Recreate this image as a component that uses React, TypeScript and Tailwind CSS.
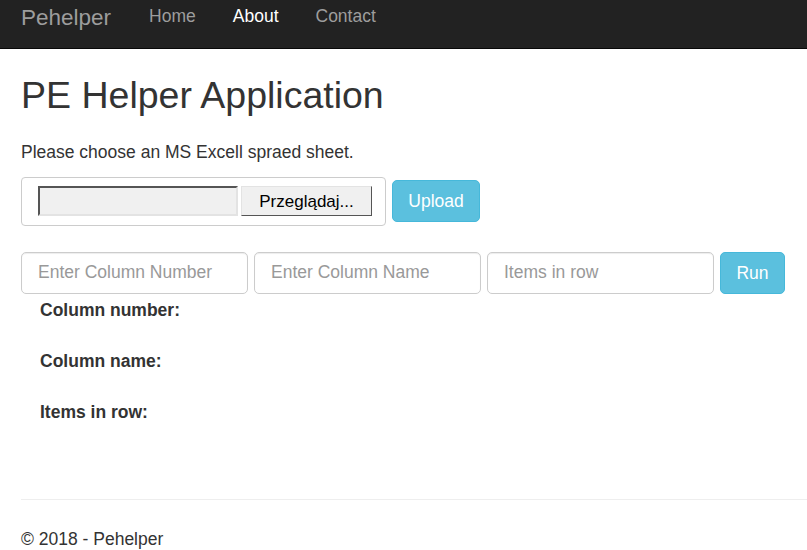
import React from 'react';

const NavLink: React.FC<{ label: string; active?: boolean }> = ({ label, active }) => (
  <a href="#" className={active ? 'text-white' : 'text-[#9d9d9d]'}>
    {label}
  </a>
);

const TextField: React.FC<{ placeholder: string }> = ({ placeholder }) => (
  <input
    type="text"
    placeholder={placeholder}
    className="h-[42px] w-[227px] rounded-[5px] border border-[#ccc] bg-white px-4 text-[17.5px] text-[#555] placeholder:text-[#999] shadow-[inset_0_1px_1px_rgba(0,0,0,0.075)] outline-none"
  />
);

const App: React.FC = () => {
  return (
    <div className="min-h-[550px] overflow-hidden bg-white font-['Liberation_Sans',Arial,sans-serif] text-[17.5px] text-[#333]">
      {/* Navbar */}
      <nav className="flex h-[49px] items-start border-b border-[#080808] bg-[#222]">
        <a href="#" className="ml-[21px] mt-[7px] block text-[22.5px] leading-none text-[#9d9d9d]">Pehelper</a>
        <div className="ml-[38px] mt-[8px] flex gap-[37px] text-[17.5px] leading-none">
          <NavLink label="Home" />
          <NavLink label="About" active />
          <NavLink label="Contact" />
        </div>
      </nav>

      <div className="pl-[21px]">
        <h1 className="mt-[26px] text-[37.5px] leading-[1.1]">PE Helper Application</h1>
        <p className="mt-[24px] leading-[1.4]">Please choose an MS Excell spraed sheet.</p>

        {/* Upload form */}
        <div className="mt-[12px] flex items-center gap-[6px]">
          <div className="flex h-[49px] w-[365px] items-center rounded-[4px] border border-[#ccc] pl-[16px]">
            <div className="h-[30px] w-[200px] border-2 border-t-[#555] border-l-[#555] border-b-[#e3e3e3] border-r-[#e3e3e3] bg-[#f0f0f0]" />
            <button className="ml-[3px] h-[30px] w-[131px] border border-b-[#555] border-r-[#555] border-t-[#e3e3e3] border-l-[#e3e3e3] bg-[#f0f0f0] text-[17px] text-black">
              Przeglądaj...
            </button>
          </div>
          <button className="h-[42px] w-[88px] rounded-[5px] border border-[#46b8da] bg-[#5bc0de] text-white">
            Upload
          </button>
        </div>

        {/* Column inputs */}
        <div className="mt-[26px] flex gap-[6px]">
          <TextField placeholder="Enter Column Number" />
          <TextField placeholder="Enter Column Name" />
          <TextField placeholder="Items in row" />
          <button className="h-[42px] w-[65px] rounded-[5px] border border-[#46b8da] bg-[#5bc0de] text-white">
            Run
          </button>
        </div>

        <div className="pl-[19px] font-bold leading-[25px]">
          <p className="mt-[4px]">Column number:</p>
          <p className="mt-[26px]">Column name:</p>
          <p className="mt-[26px]">Items in row:</p>
        </div>

        <footer>
          <hr className="mt-[74px] border-t border-[#eee]" />
          <p className="mt-[26px]">© 2018 - Pehelper</p>
        </footer>
      </div>
    </div>
  );
};

export default App;
